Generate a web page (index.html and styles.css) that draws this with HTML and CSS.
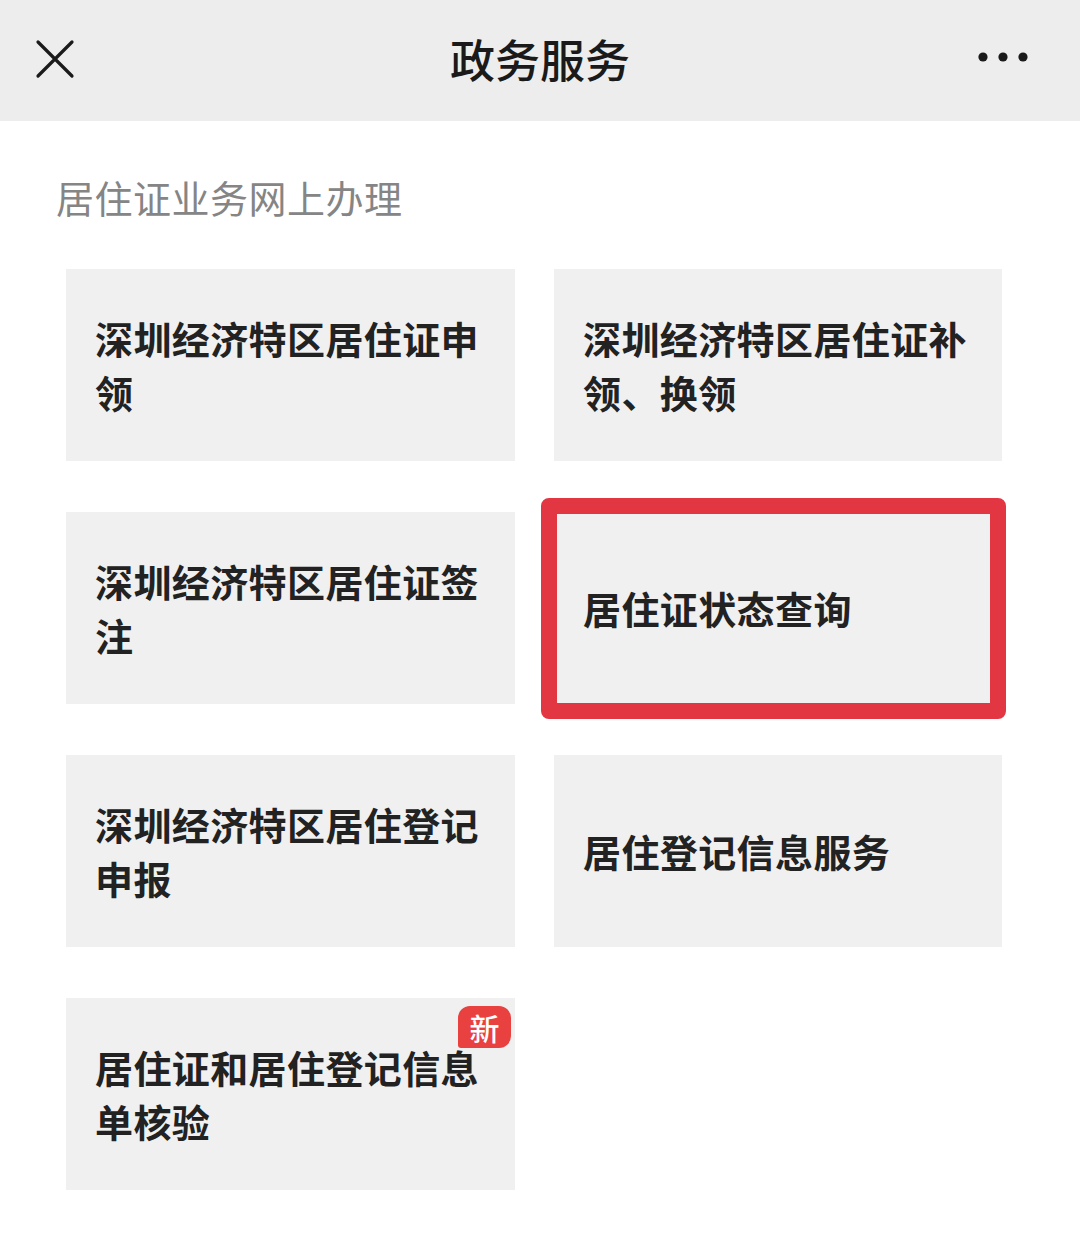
FILE: index.html
```html
<!DOCTYPE html>
<html lang="zh-CN">
<head>
<meta charset="utf-8">
<title>政务服务</title>
<link rel="stylesheet" href="styles.css">
</head>
<body>
<header class="topbar">
  <span class="close-btn" aria-label="关闭">
    <svg width="40" height="40" viewBox="0 0 40 40"><path d="M3 3 L37 37 M37 3 L3 37" stroke="#1a1a1a" stroke-width="3.2" stroke-linecap="round" fill="none"/></svg>
  </span>
  <h1 class="title">政务服务</h1>
  <span class="more-btn" aria-label="更多">
    <svg width="50" height="12" viewBox="0 0 50 12"><circle cx="5" cy="6" r="4.6" fill="#1a1a1a"/><circle cx="25" cy="6" r="4.6" fill="#1a1a1a"/><circle cx="45" cy="6" r="4.6" fill="#1a1a1a"/></svg>
  </span>
</header>
<main class="content">
  <h2 class="section-title">居住证业务网上办理</h2>
  <div class="grid">
    <div class="card">深圳经济特区居住证申领</div>
    <div class="card">深圳经济特区居住证补领、换领</div>
    <div class="card">深圳经济特区居住证签注</div>
    <div class="card highlighted">居住证状态查询<span class="mark"></span></div>
    <div class="card">深圳经济特区居住登记申报</div>
    <div class="card">居住登记信息服务</div>
    <div class="card">居住证和居住登记信息单核验<span class="badge">新</span></div>
  </div>
</main>
</body>
</html>
```
FILE: styles.css
```css
* { box-sizing: border-box; }
html, body {
  margin: 0;
  padding: 0;
  background: #ffffff;
  font-family: "Noto Sans CJK SC", "Noto Sans", sans-serif;
}
.topbar {
  height: 121px;
  background: #ededed;
  display: flex;
  align-items: center;
  justify-content: space-between;
  padding: 0 52px 0 35px;
  position: relative;
}
.close-btn { display: flex; width: 40px; height: 40px; margin-top: -4px; }
.more-btn { display: flex; margin-top: -8px; }
.title {
  position: absolute;
  left: 0;
  right: 0;
  top: 0;
  height: 116px;
  margin: 0;
  display: flex;
  align-items: center;
  justify-content: center;
  font-size: 45px;
  font-weight: 500;
  color: #1a1a1a;
  pointer-events: none;
}
.content {
  padding: 57px 0 0 0;
}
.section-title {
  margin: 0 0 0 56px;
  font-size: 38px;
  line-height: 38px;
  font-weight: 400;
  letter-spacing: 0.5px;
  color: #858585;
}
.grid {
  margin: 53px 0 0 66px;
  display: grid;
  grid-template-columns: 449px 448px;
  grid-auto-rows: 192px;
  column-gap: 39px;
  row-gap: 51px;
}
.card {
  position: relative;
  background: #f0f0f0;
  display: flex;
  align-items: center;
  padding: 0 26px 0 29px;
  font-size: 38px;
  line-height: 54px;
  font-weight: 700;
  letter-spacing: 0.4px;
  color: #222222;
}
.mark {
  position: absolute;
  left: -13px;
  top: -14px;
  right: -4px;
  bottom: -15px;
  border: 16px solid #e23743;
  border-radius: 8px;
  pointer-events: none;
}
.badge {
  position: absolute;
  top: 8px;
  right: 4px;
  width: 53px;
  height: 42px;
  background: #e8413f;
  color: #ffffff;
  font-size: 30px;
  line-height: 42px;
  font-weight: 500;
  letter-spacing: 0;
  text-align: center;
  border-radius: 12px 12px 12px 3px;
}
```
